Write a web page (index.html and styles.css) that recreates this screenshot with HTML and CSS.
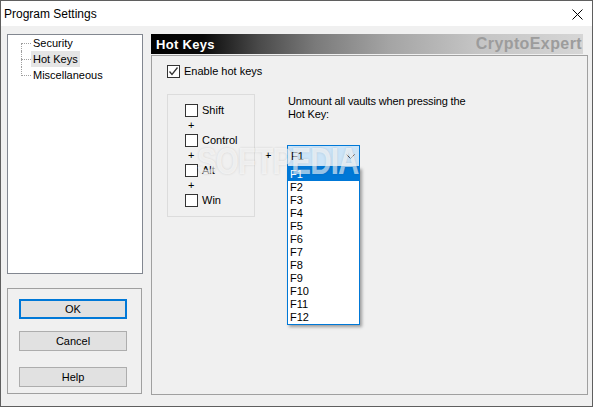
FILE: index.html
```html
<!DOCTYPE html>
<html>
<head>
<meta charset="utf-8">
<title>Program Settings</title>
<link rel="stylesheet" href="styles.css">
</head>
<body>
<div class="window">
  <div class="titlebar">
    <span class="title">Program Settings</span>
    <svg class="close" width="11" height="11" viewBox="0 0 11 11"><path d="M0.5 0.5 L10.5 10.5 M10.5 0.5 L0.5 10.5" stroke="#000" stroke-width="1" fill="none"/></svg>
  </div>
  <div class="content">
    <div class="left">
      <ul class="tree">
        <li class="node first"><span class="branch"></span><span class="label">Security</span></li>
        <li class="node sel"><span class="branch"></span><span class="label">Hot Keys</span></li>
        <li class="node last"><span class="branch"></span><span class="label">Miscellaneous</span></li>
      </ul>
      <div class="btnbox">
        <button class="btn default">OK</button>
        <button class="btn">Cancel</button>
        <button class="btn">Help</button>
      </div>
    </div>
    <div class="right">
      <div class="header"><span class="htitle">Hot Keys</span><span class="brand">CryptoExpert</span></div>
      <div class="panel">
        <label class="check-row">
          <span class="cb checked"><svg width="11" height="11" viewBox="0 0 11 11"><path d="M1.5 5.5 L4 8.5 L9.5 1.5" stroke="#333" stroke-width="1.3" fill="none"/></svg></span>
          <span class="cb-text">Enable hot keys</span>
        </label>
        <div class="hotkey-row">
          <div class="mods">
            <label class="check-row"><span class="cb"></span><span class="cb-text">Shift</span></label>
            <div class="plus">+</div>
            <label class="check-row"><span class="cb"></span><span class="cb-text">Control</span></label>
            <div class="plus">+</div>
            <label class="check-row"><span class="cb"></span><span class="cb-text">Alt</span></label>
            <div class="plus">+</div>
            <label class="check-row"><span class="cb"></span><span class="cb-text">Win</span></label>
          </div>
          <div class="plus-col">+</div>
          <div class="key-col">
            <div class="key-label">Unmount all vaults when pressing the Hot Key:</div>
            <div class="combo-wrap">
              <div class="combo">
                <span>F1</span>
                <svg class="chev" width="9" height="5" viewBox="0 0 9 5"><path d="M0.5 0.5 L4.5 4.5 L8.5 0.5" stroke="#444" stroke-width="1" fill="none"/></svg>
              </div>
              <ul class="droplist">
                <li class="hl">F1</li>
                <li>F2</li>
                <li>F3</li>
                <li>F4</li>
                <li>F5</li>
                <li>F6</li>
                <li>F7</li>
                <li>F8</li>
                <li>F9</li>
                <li>F10</li>
                <li>F11</li>
                <li>F12</li>
              </ul>
            </div>
          </div>
        </div>
      </div>
    </div>
  </div>
  <div class="watermark">SOFTPEDIA</div>
</div>
</body>
</html>
```
FILE: styles.css
```css
* { box-sizing: border-box; }
html, body { margin: 0; padding: 0; }
body {
  width: 593px;
  height: 407px;
  overflow: hidden;
  font-family: "Liberation Sans", Arial, sans-serif;
  font-size: 11px;
  color: #000;
  background: #f0f0f0;
}
.window {
  position: relative;
  width: 593px;
  height: 407px;
  border: 1px solid #5f5f5f;
  background: #f0f0f0;
  display: flex;
  flex-direction: column;
  overflow: hidden;
}
.titlebar {
  height: 25px;
  background: #fff;
  display: flex;
  align-items: center;
  padding-left: 3px;
  flex: none;
}
.title {
  font-size: 12px;
  font-family: "Liberation Sans", Arial, sans-serif;
}
.close {
  margin-left: auto;
  margin-right: 9px;
  margin-top: 1px;
}
.content {
  flex: 1;
  display: flex;
  padding: 8px 0 0 6px;
  gap: 8px;
}
.left {
  width: 136px;
  display: flex;
  flex-direction: column;
  gap: 14px;
}
.tree {
  list-style: none;
  margin: 0;
  padding: 0 0 0 13px;
  height: 240px;
  background: #fff;
  border: 1px solid #828790;
}
.node {
  height: 16px;
  display: flex;
  align-items: center;
}
.branch {
  position: relative;
  width: 10px;
  height: 16px;
  flex: none;
}
.branch::before {
  content: "";
  position: absolute;
  left: 0;
  top: 8px;
  width: 10px;
  border-top: 1px dotted #a0a0a0;
}
.branch::after {
  content: "";
  position: absolute;
  left: 0;
  top: 0;
  height: 16px;
  border-left: 1px dotted #a0a0a0;
}
.first .branch::after { top: 8px; height: 8px; }
.last .branch::after { height: 9px; }
.label {
  padding: 0 2px;
  height: 16px;
  line-height: 17px;
}
.sel .label { background: #e5e5e5; }
.btnbox {
  height: 106px;
  width: 135px;
  border: 1px solid #a0a0a0;
  padding: 10px 0 0 11px;
  display: flex;
  flex-direction: column;
}
.btn {
  width: 108px;
  height: 20px;
  font-family: "Liberation Sans", Arial, sans-serif;
  font-size: 11px;
  color: #000;
  background: #e1e1e1;
  border: 1px solid #adadad;
  padding: 0;
  margin: 0;
}
.btn.default { border: 2px solid #0078d7; }
.btn + .btn { margin-top: 12px; }
.btn + .btn + .btn { margin-top: 16px; }
.right {
  width: 437px;
  display: flex;
  flex-direction: column;
}
.header {
  width: 432px;
  height: 20px;
  flex: none;
  display: flex;
  align-items: center;
  justify-content: space-between;
  padding: 0 1px 0 5px;
  background: linear-gradient(to right, #000 0%, #0a0a0a 12%, #4a4a4a 25%, #7a7a7a 38%, #a4a4a4 55%, #c4c4c4 75%, #d6d6d6 100%);
}
.htitle {
  color: #fff;
  font-weight: bold;
  font-size: 13px;
  letter-spacing: 0.3px;
}
.brand {
  color: #9c9c9c;
  font-weight: bold;
  font-size: 16px;
  letter-spacing: 0.4px;
}
.panel {
  margin-top: 1px;
  height: 340px;
  border: 1px solid #a0a0a0;
  padding: 9px 0 0 15px;
}
.check-row {
  display: flex;
  align-items: center;
  height: 13px;
}
.cb {
  width: 13px;
  height: 13px;
  border: 1px solid #333;
  background: #fff;
  flex: none;
  display: flex;
  align-items: center;
  justify-content: center;
}
.cb-text {
  margin-left: 4px;
  line-height: 13px;
}
.hotkey-row {
  display: flex;
  margin-top: 16px;
}
.mods {
  width: 88px;
  height: 123px;
  border: 1px solid #dcdcdc;
  padding: 9px 0 0 17px;
  flex: none;
}
.plus {
  height: 17px;
  line-height: 17px;
  padding-left: 3px;
}
.plus-col {
  width: 32px;
  padding: 55px 0 0 10px;
  line-height: 13px;
  flex: none;
}
.key-col {
  display: flex;
  flex-direction: column;
}
.key-label {
  margin-top: 1px;
  width: 186px;
  line-height: 13px;
  padding-left: 1px;
  letter-spacing: -0.15px;
}
.combo-wrap {
  position: relative;
  margin-top: 24px;
  width: 73px;
}
.combo {
  height: 22px;
  border: 1px solid #0078d7;
  background: #cce4f7;
  display: flex;
  align-items: center;
  padding: 0 4px 0 3px;
  justify-content: space-between;
}
.chev { margin-top: 1px; }
.droplist {
  position: absolute;
  top: 22px;
  left: 0;
  width: 73px;
  margin: 0;
  padding: 0;
  list-style: none;
  background: #fff;
  border: 1px solid #0078d7;
  box-shadow: 2px 2px 3px rgba(0, 0, 0, 0.35);
  z-index: 2;
}
.droplist li {
  height: 13px;
  line-height: 13px;
  padding-left: 2px;
}
.droplist li.hl {
  background: #0078d7;
  color: #fff;
}
.watermark {
  position: absolute;
  left: 196px;
  top: 140px;
  font-family: "Liberation Sans", Arial, sans-serif;
  font-weight: bold;
  font-size: 36px;
  letter-spacing: -1px;
  color: rgba(255, 255, 255, 0.6);
  text-shadow: 0 0 3px rgba(0, 0, 0, 0.12);
  transform: scaleX(0.82);
  transform-origin: left top;
  z-index: 3;
  pointer-events: none;
}
```
